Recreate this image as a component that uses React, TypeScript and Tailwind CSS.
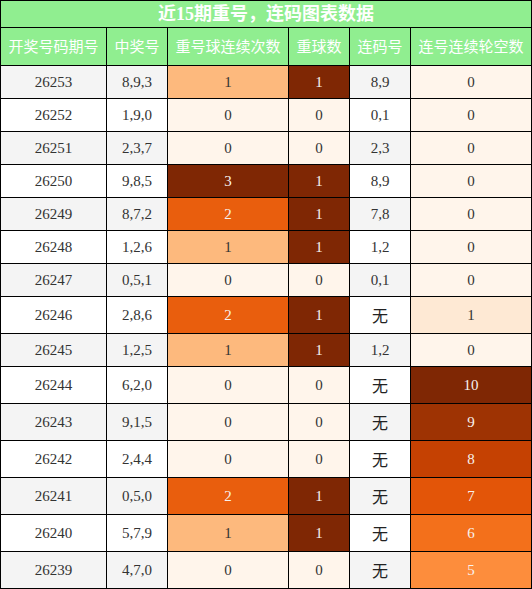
import React from "react";

type Row = { id: string; nums: string; rep: number; cnt: number; lian: string; gap: number };

const rows: Row[] = [
  { id: "26253", nums: "8,9,3", rep: 1, cnt: 1, lian: "8,9", gap: 0 },
  { id: "26252", nums: "1,9,0", rep: 0, cnt: 0, lian: "0,1", gap: 0 },
  { id: "26251", nums: "2,3,7", rep: 0, cnt: 0, lian: "2,3", gap: 0 },
  { id: "26250", nums: "9,8,5", rep: 3, cnt: 1, lian: "8,9", gap: 0 },
  { id: "26249", nums: "8,7,2", rep: 2, cnt: 1, lian: "7,8", gap: 0 },
  { id: "26248", nums: "1,2,6", rep: 1, cnt: 1, lian: "1,2", gap: 0 },
  { id: "26247", nums: "0,5,1", rep: 0, cnt: 0, lian: "0,1", gap: 0 },
  { id: "26246", nums: "2,8,6", rep: 2, cnt: 1, lian: "无", gap: 1 },
  { id: "26245", nums: "1,2,5", rep: 1, cnt: 1, lian: "1,2", gap: 0 },
  { id: "26244", nums: "6,2,0", rep: 0, cnt: 0, lian: "无", gap: 10 },
  { id: "26243", nums: "9,1,5", rep: 0, cnt: 0, lian: "无", gap: 9 },
  { id: "26242", nums: "2,4,4", rep: 0, cnt: 0, lian: "无", gap: 8 },
  { id: "26241", nums: "0,5,0", rep: 2, cnt: 1, lian: "无", gap: 7 },
  { id: "26240", nums: "5,7,9", rep: 1, cnt: 1, lian: "无", gap: 6 },
  { id: "26239", nums: "4,7,0", rep: 0, cnt: 0, lian: "无", gap: 5 },
];

const LIGHT = "text-[#f7f2ee]";
const DARK = "text-[#333333]";

const repCls: Record<number, string> = {
  0: "bg-[#fff5eb] text-[#333333]",
  1: "bg-[#fdb97d] text-[#333333]",
  2: "bg-[#e95e0d] text-[#f7f2ee]",
  3: "bg-[#7f2704] text-[#f7f2ee]",
};
const cntCls: Record<number, string> = {
  0: "bg-[#fff5eb] text-[#333333]",
  1: "bg-[#7f2704] text-[#f7f2ee]",
};
const gapCls: Record<number, string> = {
  0: "bg-[#fff5eb] text-[#333333]",
  1: "bg-[#fee9d4] text-[#333333]",
  5: "bg-[#fd8d3c] text-[#f7f2ee]",
  6: "bg-[#f3701b] text-[#f7f2ee]",
  7: "bg-[#e35508] text-[#f7f2ee]",
  8: "bg-[#c54102] text-[#f7f2ee]",
  9: "bg-[#9e3303] text-[#f7f2ee]",
  10: "bg-[#7f2704] text-[#f7f2ee]",
};

const gridCols = "grid grid-cols-[105px_60px_120px_60px_60px_120px] gap-px";
const serif = "font-['Liberation_Serif','Noto_Sans_CJK_SC',serif] text-[15px]";
const cjk = "font-['Noto_Sans_CJK_SC',sans-serif]";

const headers = ["开奖号码期号", "中奖号", "重号球连续次数", "重球数", "连码号", "连号连续轮空数"];

export default function App() {
  void LIGHT;
  void DARK;
  return (
    <div className="w-[532px] h-[589px] bg-white">
      <div className="flex flex-col gap-px bg-black border border-black w-[532px]">
        <div
          className={`h-[26px] bg-[#90ee90] text-white font-bold text-[18px] leading-[26px] text-center font-['Liberation_Serif','Noto_Sans_CJK_SC',sans-serif]`}
        >
          近15期重号，连码图表数据
        </div>
        <div className={`${gridCols} h-[37px]`}>
          {headers.map((h) => (
            <div
              key={h}
              className={`bg-[#90ee90] text-white text-[15px] flex items-center justify-center ${cjk}`}
            >
              {h}
            </div>
          ))}
        </div>
        {rows.map((r, i) => {
          const stripe = i % 2 === 0 ? "bg-[#f4f4f4]" : "bg-white";
          const tall = r.lian === "无";
          return (
            <div key={r.id} className={`${gridCols} ${tall ? "h-[36px]" : "h-[32px]"}`}>
              <div className={`${stripe} ${serif} text-[#333333] flex items-center justify-center`}>{r.id}</div>
              <div className={`${stripe} ${serif} text-[#333333] flex items-center justify-center`}>{r.nums}</div>
              <div className={`${repCls[r.rep]} ${serif} flex items-center justify-center`}>{r.rep}</div>
              <div className={`${cntCls[r.cnt]} ${serif} flex items-center justify-center`}>{r.cnt}</div>
              {tall ? (
                <div className={`${stripe} text-[16px] text-[#222222] ${cjk} flex items-center justify-center`}>无</div>
              ) : (
                <div className={`${stripe} ${serif} text-[#333333] flex items-center justify-center`}>{r.lian}</div>
              )}
              <div className={`${gapCls[r.gap]} ${serif} flex items-center justify-center`}>{r.gap}</div>
            </div>
          );
        })}
      </div>
    </div>
  );
}
